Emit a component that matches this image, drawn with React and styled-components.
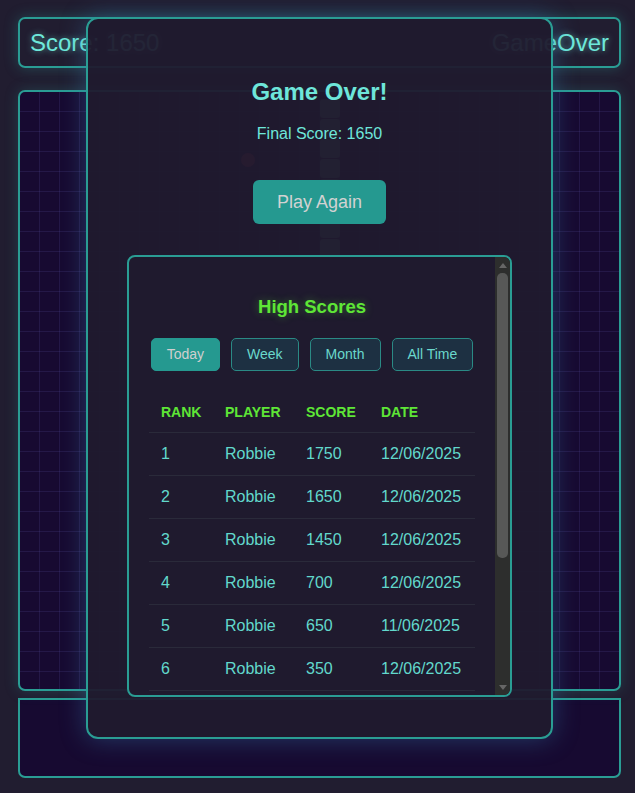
import React, { useState } from 'react';
import styled, { createGlobalStyle } from 'styled-components';

const GlobalStyle = createGlobalStyle`
  body {
    margin: 0;
    background: #211d30;
    font-family: 'Liberation Sans', Arial, sans-serif;
  }
`;

const Page = styled.div`
  position: relative;
  display: flex;
  flex-direction: column;
  padding: 17px 14px 18px 18px;
  min-height: 793px;
  box-sizing: border-box;
`;

const TopBar = styled.div`
  height: 51px;
  box-sizing: border-box;
  display: flex;
  justify-content: space-between;
  align-items: center;
  padding: 0 10px;
  border: 2px solid #2a9d94;
  border-radius: 7px;
  box-shadow: 0 0 14px rgba(42, 157, 148, 0.35);
  color: #6ee8da;
  font-size: 24px;
  text-shadow: 0 0 6px rgba(110, 232, 218, 0.6);
`;

const Board = styled.div`
  position: relative;
  margin-top: 22px;
  height: 601px;
  box-sizing: border-box;
  border: 2px solid #2a9d94;
  border-radius: 7px;
  background-color: #170a31;
  background-image:
    linear-gradient(to right, transparent 19px, rgba(90, 80, 160, 0.2) 19px),
    linear-gradient(to bottom, transparent 19px, rgba(90, 80, 160, 0.2) 19px);
  background-size: 20px 20px;
  box-shadow: 0 0 14px rgba(42, 157, 148, 0.25);
  overflow: hidden;
`;

const Segment = styled.div`
  position: absolute;
  width: 20px;
  height: 19px;
  border-radius: 3px;
  background: #4e8072;
`;

const Food = styled.div`
  position: absolute;
  width: 14px;
  height: 14px;
  border-radius: 50%;
  background: #a02840;
`;

const Controls = styled.div`
  margin-top: 7px;
  height: 80px;
  box-sizing: border-box;
  border: 2px solid #2a9d94;
  border-radius: 0 0 7px 7px;
  background: #170a31;
`;

const Modal = styled.div`
  position: absolute;
  top: 17px;
  left: 86px;
  width: 467px;
  box-sizing: border-box;
  display: flex;
  flex-direction: column;
  align-items: center;
  padding: 59px 39px 40px;
  background: rgba(32, 26, 46, 0.95);
  border: 2px solid #2a9d94;
  border-radius: 12px;
  box-shadow: 0 0 26px rgba(50, 120, 170, 0.45);
`;

const Title = styled.h2`
  margin: 0;
  font-size: 24px;
  line-height: 28px;
  font-weight: bold;
  color: #6ee6da;
`;

const FinalScore = styled.p`
  margin: 18px 0 0;
  font-size: 16px;
  line-height: 20px;
  color: #6ee6da;
`;

const PlayButton = styled.button`
  margin-top: 36px;
  padding: 12px 24px;
  font-family: inherit;
  font-size: 18px;
  line-height: 20px;
  color: #d2d2d2;
  background: #259990;
  border: none;
  border-radius: 6px;
  cursor: pointer;
`;

const ScoreBox = styled.div`
  margin-top: 31px;
  width: 100%;
  height: 442px;
  box-sizing: border-box;
  display: flex;
  border: 2px solid #2a9d94;
  border-radius: 8px;
  overflow: hidden;
  background: #1f1a2e;
`;

const ScoreScroll = styled.div`
  flex: 1;
  min-width: 0;
  padding: 20px;
  overflow-y: auto;
  scrollbar-width: none;
  &::-webkit-scrollbar {
    display: none;
  }
`;

const Rail = styled.div`
  width: 15px;
  flex-shrink: 0;
  display: flex;
  flex-direction: column;
  background: #2d2e2d;
`;

const RailButton = styled.div`
  height: 16px;
  flex-shrink: 0;
  display: flex;
  align-items: center;
  justify-content: center;
  &::before {
    content: '';
    width: 0;
    height: 0;
    border-left: 4px solid transparent;
    border-right: 4px solid transparent;
    ${p => (p.down ? 'border-top: 5px solid #666;' : 'border-bottom: 5px solid #666;')}
  }
`;

const Thumb = styled.div`
  height: ${p => p.size}px;
  margin: 0 2px;
  border-radius: 5px;
  background: #575857;
`;

const Spacer = styled.div`
  flex: 1;
`;

const BoxTitle = styled.h3`
  margin: 19px 0 21px;
  text-align: center;
  font-size: 18.5px;
  line-height: 21px;
  font-weight: bold;
  color: #5ee636;
  text-shadow: 0 0 8px rgba(94, 230, 54, 0.4);
`;

const Tabs = styled.div`
  display: flex;
  justify-content: center;
  gap: 11px;
`;

const Tab = styled.button`
  padding: 7px 15px;
  font-family: inherit;
  font-size: 14px;
  line-height: 17px;
  border-radius: 5px;
  border: 1px solid ${p => (p.active ? '#259990' : '#2a8a85')};
  background: ${p => (p.active ? '#259990' : '#1d3042')};
  color: ${p => (p.active ? '#cfcfcf' : '#6ad8cc')};
  cursor: pointer;
`;

const Table = styled.table`
  margin-top: 21px;
  width: 100%;
  border-collapse: collapse;
  table-layout: fixed;
`;

const Th = styled.th`
  padding: 12px;
  text-align: left;
  font-size: 14px;
  line-height: 16px;
  font-weight: bold;
  color: #5ee636;
  border-bottom: 1px solid #2a2a3a;
`;

const Td = styled.td`
  padding: 12px;
  font-size: 16px;
  line-height: 18px;
  color: #62d8cc;
  border-bottom: 1px solid #2a2a3a;
  white-space: nowrap;
`;

const scores = [
  { score: 1750, date: '12/06/2025' },
  { score: 1650, date: '12/06/2025' },
  { score: 1450, date: '12/06/2025' },
  { score: 700, date: '12/06/2025' },
  { score: 650, date: '11/06/2025' },
  { score: 350, date: '12/06/2025' },
  { score: 300, date: '11/06/2025' },
  { score: 250, date: '12/06/2025' },
  { score: 200, date: '11/06/2025' },
  { score: 150, date: '12/06/2025' },
];

const tabs = ['Today', 'Week', 'Month', 'All Time'];

export default function App() {
  const [period, setPeriod] = useState('Today');

  return (
    <Page>
      <GlobalStyle />
      <TopBar>
        <span>Score: 1650</span>
        <span>GameOver</span>
      </TopBar>
      <Board>
        {[0, 1, 2, 3, 4, 5, 6, 7].map(i => (
          <Segment key={i} style={{ left: 300, top: 7 + i * 20 }} />
        ))}
        <Food style={{ left: 221, top: 61 }} />
      </Board>
      <Controls />

      <Modal>
        <Title>Game Over!</Title>
        <FinalScore>Final Score: 1650</FinalScore>
        <PlayButton>Play Again</PlayButton>
        <ScoreBox>
          <ScoreScroll>
            <BoxTitle>High Scores</BoxTitle>
            <Tabs>
              {tabs.map(t => (
                <Tab key={t} active={period === t} onClick={() => setPeriod(t)}>
                  {t}
                </Tab>
              ))}
            </Tabs>
            <Table>
              <colgroup>
                <col style={{ width: 64 }} />
                <col style={{ width: 81 }} />
                <col style={{ width: 75 }} />
                <col />
              </colgroup>
              <thead>
                <tr>
                  <Th>RANK</Th>
                  <Th>PLAYER</Th>
                  <Th>SCORE</Th>
                  <Th>DATE</Th>
                </tr>
              </thead>
              <tbody>
                {scores.map((s, i) => (
                  <tr key={i}>
                    <Td>{i + 1}</Td>
                    <Td>Robbie</Td>
                    <Td>{s.score}</Td>
                    <Td>{s.date}</Td>
                  </tr>
                ))}
              </tbody>
            </Table>
          </ScoreScroll>
          <Rail>
            <RailButton />
            <Thumb size={285} />
            <Spacer />
            <RailButton down />
          </Rail>
        </ScoreBox>
      </Modal>
    </Page>
  );
}
